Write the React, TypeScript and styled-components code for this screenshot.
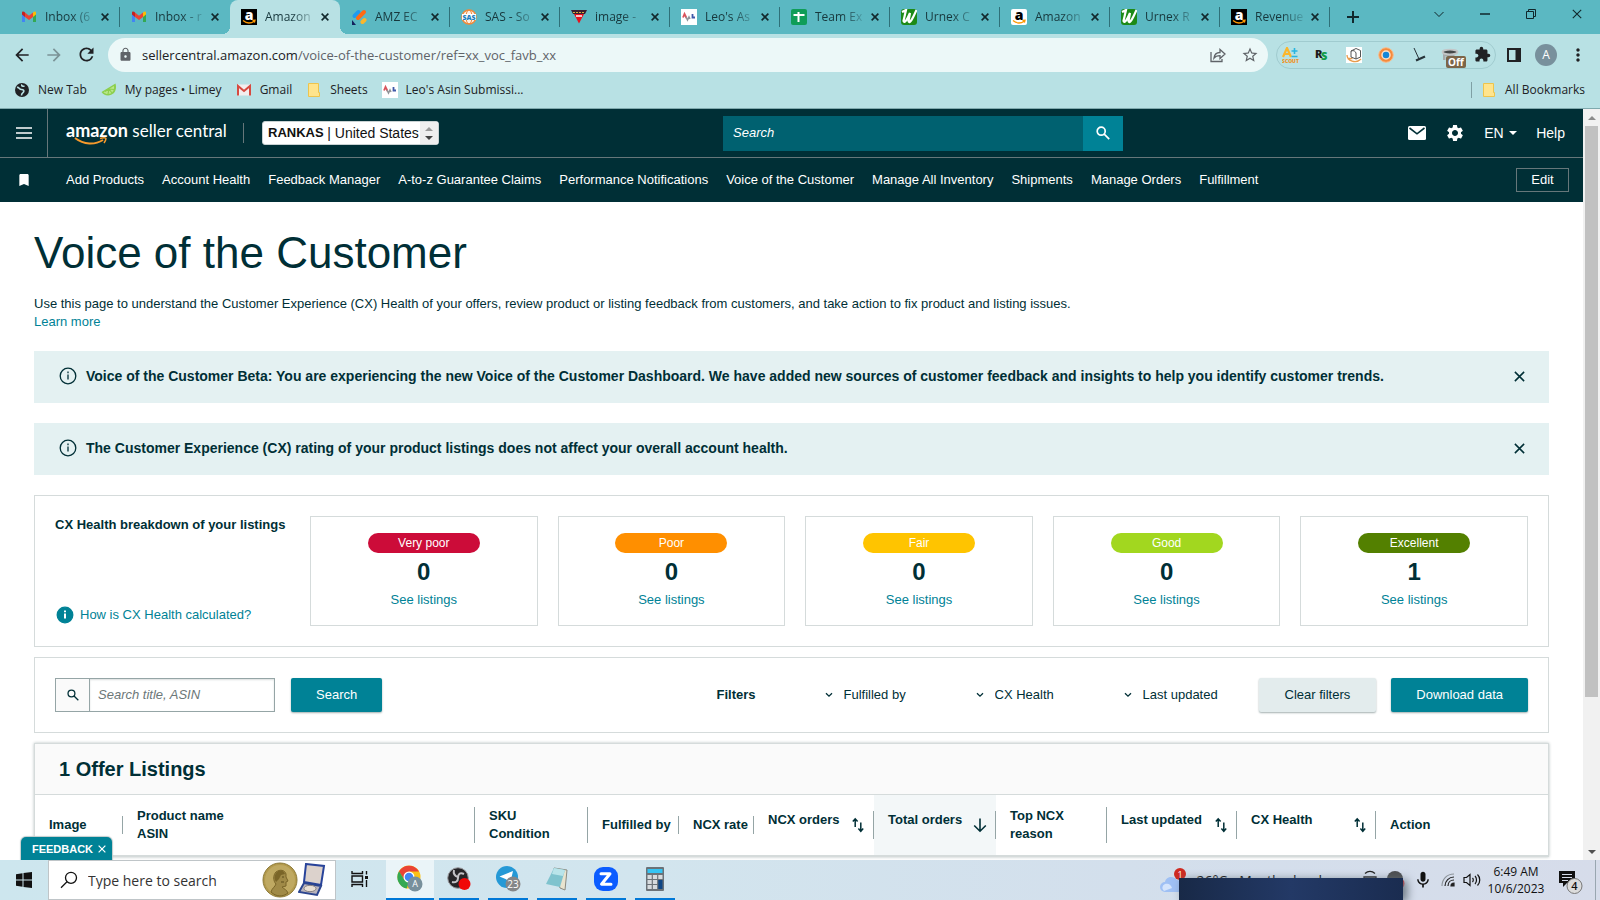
import React from 'react';
import styled, { createGlobalStyle, css } from 'styled-components';
import { MdLock, MdExtension, MdSettings, MdRefresh, MdMic, MdBookmark, MdArrowBack, MdArrowForward, MdStarBorder, MdMoreVert } from 'react-icons/md';

const ink = '#002f36';
const teal = '#008296';
const line = '#d5dbdb';
const uiFont = '"Open Sans", "Noto Sans", sans-serif';
const pageFont = '"Liberation Sans", Arial, sans-serif';

const Global = createGlobalStyle`
  * { box-sizing: border-box; }
  body { margin: 0; background: #fff; }
  button, input, select { font: inherit; color: inherit; margin: 0; }
  button { border: 0; padding: 0; background: none; display: flex; align-items: center; justify-content: center; }
  a { color: inherit; text-decoration: none; }
  svg { display: block; flex: none; }
`;

const Screen = styled.div`
  height: 100vh;
  display: flex;
  flex-direction: column;
  overflow: hidden;
  font: 13px/18px ${pageFont};
  color: ${ink};
`;

/* Browser frame */

const TabStrip = styled.div`
  display: flex;
  flex: none;
  height: 34px;
  padding-left: 10px;
  background: #5bb8c2;
  font: 12px/16px ${uiFont};
  color: #17373c;
`;
const Tab = styled.div<{ $active?: boolean; $divided?: boolean }>`
  position: relative;
  display: flex;
  align-items: center;
  flex: none;
  width: 110px;
  padding: 0 8px 0 11px;
  ${p => p.$active && css`
    z-index: 1;
    background: #b8e1e4;
    border-radius: 8px 8px 0 0;
    &::before, &::after {
      content: '';
      position: absolute;
      bottom: 0;
      width: 8px;
      height: 8px;
    }
    &::before { right: 100%; background: radial-gradient(circle at 0 0, transparent 8px, #b8e1e4 8px); }
    &::after { left: 100%; background: radial-gradient(circle at 100% 0, transparent 8px, #b8e1e4 8px); }
  `}
  ${p => p.$divided && css`
    &::after {
      content: '';
      position: absolute;
      right: 0;
      top: 7px;
      width: 1px;
      height: 20px;
      background: #2f7078;
    }
  `}
`;
const TabTitle = styled.span`
  flex: 1;
  min-width: 0;
  margin-left: 8px;
  white-space: nowrap;
  mask-image: linear-gradient(90deg, #000 50%, transparent 100%);
`;
const TabClose = styled.button`
  width: 14px;
  height: 16px;
  color: #12292d;
`;
const NewTab = styled.button`
  width: 46px;
  color: #12292d;
`;
const WindowButtons = styled.div`
  display: flex;
  margin-left: auto;
  height: 28px;
`;
const WindowButton = styled.button`
  width: 46px;
  color: #10272b;
`;

const Toolbar = styled.div`
  display: flex;
  align-items: center;
  flex: none;
  height: 41px;
  padding: 0 6px;
  background: #b8e1e4;
  color: #202124;
  font: 13px/18px ${uiFont};
`;
const ToolButton = styled.button<{ $dim?: boolean }>`
  flex: none;
  width: 32px;
  height: 28px;
  opacity: ${p => (p.$dim ? 0.4 : 1)};
`;
const AddressBar = styled.div`
  display: flex;
  align-items: center;
  flex: 1;
  height: 34px;
  margin: 0 8px 0 6px;
  padding: 0 2px 0 10px;
  border-radius: 17px;
  background: #ecf8f8;
  color: #5f6368;
`;
const Address = styled.div`
  flex: 1;
  margin-left: 9px;
  b { font-weight: 400; color: #202124; }
`;
const Extensions = styled.div`
  display: flex;
  align-items: center;
  justify-content: center;
  height: 28px;
  width: 220px;
  margin-right: 2px;
  border: 1px solid #a0cbcf;
  border-radius: 14px;
`;
const OffExt = styled.button`
  position: relative;
  flex: none;
  width: 32px;
  height: 28px;
`;
const OffBadge = styled.span`
  position: absolute;
  left: 12px;
  top: 15px;
  height: 12px;
  padding: 0 2px;
  border-radius: 2px;
  background: #7c6549;
  color: #fff;
  font: 700 10px/12px ${uiFont};
`;
const Avatar = styled.span`
  width: 22px;
  height: 22px;
  border-radius: 50%;
  background: #78909c;
  color: #fff;
  font: 12px/22px ${uiFont};
  text-align: center;
`;
const Bookmarks = styled.div`
  display: flex;
  align-items: center;
  flex: none;
  height: 34px;
  padding: 0 15px 4px 14px;
  gap: 14px;
  background: #b8e1e4;
  border-bottom: 1px solid #7fa9ad;
  color: #202124;
  font: 12px/16px ${uiFont};
`;
const Bookmark = styled.a<{ $last?: boolean }>`
  display: flex;
  align-items: center;
  gap: 8px;
  ${p => p.$last && css`
    margin-left: auto;
    padding-left: 9px;
    border-left: 1px solid #7fa0a4;
  `}
`;

/* Site */

const Viewport = styled.div`
  position: relative;
  display: flex;
  flex: 1;
  min-height: 0;
  background: #fff;
`;
const Page = styled.div`
  flex: 1;
  min-width: 0;
  overflow: hidden;
`;
const Scrollbar = styled.div`
  flex: none;
  display: flex;
  flex-direction: column;
  align-items: center;
  width: 17px;
  background: #f1f1f1;
  color: #505050;
`;
const Thumb = styled.div`
  width: 13px;
  flex: 571;
  background: #c1c1c1;
`;
const Track = styled.div`
  flex: 146;
`;
const ScrollArrow = styled.button`
  width: 17px;
  height: 17px;
`;

const Header = styled.header`
  background: ${ink};
  color: #fff;
`;
const TopRow = styled.div`
  display: flex;
  align-items: center;
  height: 49px;
  border-bottom: 1px solid #66777a;
`;
const MenuButton = styled.button`
  width: 48px;
  height: 48px;
  border-right: 1px solid #66777a;
`;
const Logo = styled.a`
  position: relative;
  margin-left: 18px;
  width: 160px;
  height: 30px;
  font: 17px/24px Lato, sans-serif;
  white-space: nowrap;
  b { font-weight: 700; font-size: 18px; }
  svg { position: absolute; left: 8px; top: 19px; }
`;
const LogoRule = styled.span`
  width: 1px;
  height: 20px;
  margin-left: 17px;
  background: #66777a;
`;
const Account = styled.label`
  position: relative;
  display: flex;
  align-items: center;
  width: 177px;
  height: 24px;
  margin-left: 18px;
  padding-left: 5px;
  border: 1px solid #c9d2d3;
  border-radius: 3px;
  background: #fff;
  color: #111;
  white-space: nowrap;
  select { position: absolute; inset: 0; width: 100%; opacity: 0; }
  span { font-size: 14px; }
`;
const Spinner = styled.i`
  display: flex;
  flex-direction: column;
  align-items: center;
  justify-content: center;
  gap: 5px;
  width: 18px;
  height: 22px;
  margin-left: auto;
  background: #efefef;
`;
const SearchBox = styled.div`
  display: flex;
  width: 400px;
  height: 35px;
  margin: 0 auto 0 284px;
  input {
    flex: 1;
    min-width: 0;
    padding: 0 10px;
    border: 0;
    background: #006170;
    font-style: italic;
  }
  input::placeholder { color: #fff; opacity: 1; }
  button { width: 40px; background: ${teal}; }
`;
const HeaderTools = styled.div`
  display: flex;
  align-items: center;
  gap: 19px;
  padding-right: 18px;
  font-size: 14px;
`;
const Language = styled.label`
  display: flex;
  align-items: center;
  gap: 5px;
  select { appearance: none; border: 0; padding: 0; background: none; }
`;
const NavRow = styled.nav`
  display: flex;
  align-items: center;
  height: 44px;
  padding: 0 14px 0 16px;
  gap: 18px;
  white-space: nowrap;
  > svg { margin-right: 16px; }
`;
const EditButton = styled.button`
  width: 53px;
  height: 24px;
  margin-left: auto;
  border: 1px solid #66777a;
`;

const Content = styled.main`
  padding: 24px 34px 0;
`;
const Title = styled.h1`
  margin: 0 0 15px;
  font: 400 44px/54px ${pageFont};
`;
const Intro = styled.p`
  margin: 0 0 20px;
  a { color: ${teal}; }
`;
const Banner = styled.div`
  display: flex;
  align-items: center;
  height: 52px;
  margin-bottom: 20px;
  padding: 0 20px 2px 25px;
  gap: 9px;
  background: #e4f1f2;
  font-weight: 700;
  font-size: 14px;
  button { margin-left: auto; width: 20px; height: 20px; }
`;
const Card = styled.section`
  border: 1px solid ${line};
  margin-bottom: 10px;
`;
const Health = styled(Card)`
  display: grid;
  grid-template-columns: 235px repeat(5, 1fr);
  gap: 20px;
  padding: 20px;
`;
const HealthIntro = styled.div`
  display: flex;
  flex-direction: column;
  justify-content: space-between;
  padding-bottom: 2px;
  white-space: nowrap;
`;
const InfoLink = styled.a`
  display: flex;
  align-items: center;
  gap: 6px;
  padding-left: 1px;
  color: ${teal};
`;
const Rating = styled.div`
  display: flex;
  flex-direction: column;
  align-items: center;
  height: 110px;
  padding-top: 16px;
  border: 1px solid ${line};
  a { color: ${teal}; }
`;
const Pill = styled.span<{ $color: string }>`
  width: 112px;
  border-radius: 10px;
  background: ${p => p.$color};
  color: #fff;
  font-size: 12px;
  line-height: 20px;
  text-align: center;
`;
const Count = styled.strong`
  font-size: 24px;
  line-height: 38px;
`;
const FilterBar = styled(Card)`
  display: flex;
  align-items: center;
  height: 76px;
  padding: 0 20px;
`;
const TitleSearch = styled.label`
  display: flex;
  width: 220px;
  height: 34px;
  margin-right: 16px;
  border: 1px solid #95a5a6;
  span {
    display: flex;
    align-items: center;
    justify-content: center;
    width: 34px;
    border-right: 1px solid #95a5a6;
    background: #fafafa;
  }
  input {
    flex: 1;
    min-width: 0;
    padding: 0 8px;
    border: 0;
    font-style: italic;
    box-shadow: inset 0 1px 2px #d9dede;
  }
  input::placeholder { color: #6c7778; opacity: 1; }
`;
const Action = styled.button<{ $quiet?: boolean }>`
  height: 34px;
  padding: 0 ${p => (p.$quiet ? 26 : 25)}px;
  border-radius: 2px;
  background: ${p => (p.$quiet ? '#e3eced' : teal)};
  color: ${p => (p.$quiet ? ink : '#fff')};
  box-shadow: 0 1px 2px #a3afb0;
  white-space: nowrap;
`;
const Filters = styled.div`
  display: flex;
  gap: 69px;
  margin: 0 40px 0 auto;
`;
const Filter = styled.label`
  display: flex;
  align-items: center;
  gap: 11px;
  select { appearance: none; border: 0; padding: 0; background: none; }
`;
const Actions = styled.div`
  display: flex;
  gap: 15px;
`;
const Listings = styled(Card)`
  margin: 0;
  box-shadow: 0 0 3px #b8c0c1;
  h2 {
    margin: 0;
    padding-left: 24px;
    background: #fafafa;
    border-bottom: 1px solid ${line};
    font-size: 20px;
    line-height: 50px;
  }
`;
const Table = styled.table`
  width: 100%;
  height: 61px;
  table-layout: fixed;
  border-collapse: collapse;
  border-bottom: 1px solid ${line};
  text-align: left;
`;
const Th = styled.th<{ $width?: number; $sorted?: boolean }>`
  width: ${p => (p.$width ? `${p.$width}px` : 'auto')};
  padding: 0;
  background: ${p => (p.$sorted ? '#f3f7f8' : 'transparent')};
  &:last-child > div { border: 0; }
`;
const HeadCell = styled.div<{ $sort?: boolean }>`
  display: flex;
  justify-content: space-between;
  min-height: ${p => (p.$sort ? 28 : 18)}px;
  padding-left: 14px;
  border-right: 1px solid #95a5a6;
  white-space: nowrap;
  button { align-self: center; width: 14px; height: 18px; margin-right: 8px; }
`;
const Feedback = styled.button`
  position: absolute;
  left: 21px;
  bottom: 0;
  width: 91px;
  height: 23px;
  gap: 5px;
  padding-left: 5px;
  border-radius: 5px 5px 0 0;
  background: ${teal};
  box-shadow: 0 0 1px 1px #c3cccd;
  color: #fff;
  font-weight: 700;
  font-size: 11px;
`;

/* Desktop task bar */

const Taskbar = styled.footer`
  position: relative;
  display: flex;
  flex: none;
  height: 40px;
  background: linear-gradient(90deg, #cde6ee, #d2e5ee 40%, #d3dfec 70%, #d6dcea);
  color: #111;
  font: 12px/17px ${uiFont};
`;
const Start = styled.button`
  width: 48px;
`;
const TaskSearch = styled.label`
  display: flex;
  align-items: center;
  width: 288px;
  padding: 0 9px 0 11px;
  border: 1px solid #bfc5c8;
  background: #fff;
  input {
    flex: 1;
    min-width: 0;
    margin-left: 10px;
    padding: 0;
    border: 0;
    background: none;
    font-size: 14px;
  }
  input::placeholder { color: #333; opacity: 1; }
`;
const Apps = styled.div`
  display: flex;
  margin-left: 3px;
  gap: 9px;
`;
const AppButton = styled.button<{ $active?: boolean; $idle?: boolean }>`
  width: ${p => (p.$active ? 48 : p.$idle ? 42 : 40)}px;
  margin: 0 ${p => (p.$active ? -4 : 0)}px;
  background: ${p => (p.$active ? '#eaf4f8' : 'none')};
  border-bottom: 2px solid ${p => (p.$idle ? 'transparent' : '#0078d7')};
`;
const Tray = styled.div`
  display: flex;
  align-items: center;
  margin-left: auto;
`;
const Weather = styled.span`
  display: flex;
  gap: 12px;
  margin: 0 16px 0 8px;
  font-size: 14px;
  white-space: nowrap;
`;
const TrayIcons = styled.div`
  display: flex;
  align-items: center;
  gap: 8px;
`;
const Clock = styled.div`
  width: 58px;
  margin: 0 14px 0 6px;
  text-align: center;
`;
const ShowDesktop = styled.span`
  width: 5px;
  height: 40px;
  margin-left: 12px;
  border-left: 1px solid #99a6b0;
`;
const Preview = styled.div`
  position: absolute;
  right: 197px;
  bottom: 0;
  width: 224px;
  height: 22px;
  background: linear-gradient(90deg, #182947, #233966 50%, #1a2c50);
  box-shadow: 4px 2px 10px #6b7680;
`;

/* Drawings */

const Cross = ({ size = 8, weight = 2 }: { size?: number; weight?: number }) => (
  <svg width={size} height={size} viewBox="0 0 10 10" stroke="currentColor" strokeWidth={weight}><path d="M.8.8l8.400 8.400M9.200.8L.8 9.200" /></svg>
);
const Triangle = ({ up, width = 8, color = 'currentColor' }: { up?: boolean; width?: number; color?: string }) => (
  <svg width={width} height={width / 2} viewBox="0 0 8 4" fill={color}><path d={up ? 'M0 4L4 0l4 4z' : 'M0 0h8L4 4z'} /></svg>
);
const Chevron = () => (
  <svg width="8" height="6" viewBox="0 0 8 6" fill="none" stroke="currentColor" strokeWidth="1.3"><path d="M1 1.2l3 3 3-3" /></svg>
);
const Lens = ({ size = 14, weight = 1.7 }: { size?: number; weight?: number }) => (
  <svg width={size} height={size} viewBox="0 0 14 14" fill="none" stroke="currentColor" strokeWidth={weight}><circle cx="5.2" cy="5.2" r="4" /><path d="M8.2 8.2l5 5" /></svg>
);
const InfoIcon = ({ solid }: { solid?: boolean }) => (
  <svg width="18" height="18" viewBox="0 0 18 18">
    <circle cx="9" cy="9" r="7.8" fill={solid ? teal : 'none'} stroke={solid ? teal : ink} strokeWidth="1.3" />
    <path d="M9 7.6v5M9 4.6v1.6" stroke={solid ? '#fff' : ink} strokeWidth={solid ? 2 : 1.3} />
  </svg>
);
const SortIcon = () => (
  <svg width="12" height="16" viewBox="0 0 12 16" fill="none" stroke={ink} strokeWidth="1.5"><path d="M3.2 10V2M.8 4.600l2.400-2.800 2.400 2.800M8.800 5.500v8.500M6.400 11.600l2.400 2.800 2.400-2.800" /></svg>
);
const DownIcon = () => (
  <svg width="14" height="16" viewBox="0 0 14 16" fill="none" stroke={ink} strokeWidth="1.6"><path d="M7 1.500v12.500M1.200 8.500L7 14.200l5.800-5.700" /></svg>
);
const GmailIcon = () => (
  <svg width="16" height="16" viewBox="0 0 16 16">
    <path d="M1 3.500v9.500h3V6z" fill="#4285f4" /><path d="M15 3.500v9.500h-3V6z" fill="#34a853" />
    <path d="M12 3.600V8l3-2.500V4c0-1.700-1.700-2-3-.4z" fill="#fbbc04" /><path d="M4 8V3.600L8 6.700l4-3.100V8l-4 3z" fill="#ea4335" />
    <path d="M1 4v1.500L4 8V3.600C2.700 2 1 2.300 1 4z" fill="#c5221f" />
  </svg>
);
const OldGmailIcon = () => (
  <svg width="16" height="16" viewBox="0 0 16 16"><rect x="1" y="2.500" width="14" height="11" rx="1" fill="#f3eeee" /><path d="M2 13.500V4l6 5 6-5v9.500" fill="none" stroke="#d64a40" strokeWidth="2" /></svg>
);
const AmazonIcon = ({ light }: { light?: boolean }) => (
  <svg width="16" height="16" viewBox="0 0 16 16">
    <rect width="16" height="16" rx={light ? 2 : 0} fill={light ? '#fff' : '#000'} />
    <text x="8" y="10.500" textAnchor="middle" fontFamily="Open Sans" fontWeight="800" fontSize="14" fill={light ? '#000' : '#fff'}>a</text>
    <path d="M2 11.500c3.500 3 8 3 11.500.4M11.500 11.400l2.500-.1-.6 2.300" fill="none" stroke="#f90" strokeWidth="1.300" />
  </svg>
);
const AmzIcon = () => (
  <svg width="16" height="16" viewBox="0 0 16 16" strokeWidth="4" strokeLinecap="round"><path d="M3.500 7L7.500 3" stroke="#1e9bf0" /><path d="M7 9l6-6" stroke="#ff6a13" /><path d="M11.500 13l2-2" stroke="#fbb72c" /><path d="M1 11v5h4z" fill="#13205c" /></svg>
);
const SasIcon = () => (
  <svg width="16" height="16" viewBox="0 0 16 16">
    <circle cx="8" cy="8" r="7" fill="#fdf1e6" stroke="#ee8a3c" strokeWidth="1.500" /><ellipse cx="8" cy="8" rx="3" ry="7" fill="none" stroke="#ee8a3c" />
    <path d="M1 5h14v6H1z" fill="#fff" /><text x="8" y="10.600" textAnchor="middle" fontFamily="Open Sans" fontWeight="800" fontSize="7" fill="#1a7fc0">SAS</text>
  </svg>
);
const FlagIcon = () => (
  <svg width="16" height="16" viewBox="0 0 16 16"><path d="M0 1h16l-2 4H2z" fill="#3c2030" /><path d="M2 3.500h12" stroke="#d8b33c" strokeDasharray="2 1" /><path d="M3 5h10l-5 9.500z" fill="#e8111c" /><path d="M5 7h6" stroke="#fff" strokeWidth="1.500" /></svg>
);
const LeoIcon = () => (
  <svg width="16" height="16" viewBox="0 0 16 16"><rect width="16" height="16" fill="#fff" /><path d="M2 8.500L3.500 5l2 4" fill="none" stroke="#d8545c" strokeWidth="1.800" /><path d="M5 8l1.500 3L8 8l1 2" fill="none" stroke="#8e9498" strokeWidth="1.500" /><path d="M11.500 5v3.500H14" fill="none" stroke="#4059a8" strokeWidth="1.800" /></svg>
);
const SheetsIcon = () => (
  <svg width="16" height="16" viewBox="0 0 16 16"><rect width="16" height="16" rx="2" fill="#0f9d58" /><path d="M7.500 3v10M2.500 6h11" stroke="#fff" strokeWidth="2" /></svg>
);
const UrnexIcon = () => (
  <svg width="16" height="16" viewBox="0 0 16 16"><rect width="16" height="16" rx="3" fill="#1d8a17" /><path d="M1 3l4-2L2.500 12c1 3 4-2 6.500-8L7.500 12c1 4 5-4 8-11" fill="none" stroke="#fff" strokeWidth="2.200" /></svg>
);
const GlobeIcon = () => (
  <svg width="16" height="16" viewBox="0 0 16 16"><circle cx="8" cy="8" r="7" fill="#202124" /><path d="M3 5.500c2-1 2 2 4.500 2 2 0 3 1 2 2.500s-2 1-2 3.500M8 2.500c-1 1.500 1 2 2.500 1.500" fill="none" stroke="#b8e1e4" strokeWidth="1.600" /></svg>
);
const LimeIcon = () => (
  <svg width="16" height="16" viewBox="0 0 16 16"><path d="M14.500 1.500c2 7-2 12-7.500 12-3 0-5-1.500-6.500-3.500z" fill="#8ccf4d" /><path d="M13 4c.5 4.500-2 8-6 8-2 0-3-.7-4.500-1.800z" fill="#b9e68a" /><path d="M8 7l-1 5M8 7l3 4M8 7l5 .5M8 7L4 9.500" stroke="#8ccf4d" strokeWidth="1.200" /></svg>
);
const FolderIcon = () => (
  <svg width="16" height="16" viewBox="0 0 16 16"><path d="M2.500 1.500h10v9h1v4h-11z" fill="#ffe48c" stroke="#edc44c" /></svg>
);
const ShareIcon = () => (
  <svg width="16" height="16" viewBox="0 0 16 16" fill="none" stroke="currentColor" strokeWidth="1.300"><path d="M1 5v9.500h11V12M4 11c.5-4 3-5.500 6-5.500v-3l5 4.500-5 4.500V8.600c-2.500 0-4.500.4-6 2.400z" /></svg>
);
const ScoutIcon = () => (
  <svg width="17" height="16" viewBox="0 0 17 16"><path d="M1 10L5 1l4 9M3 7h4.500" fill="none" stroke="#fbb62b" strokeWidth="2.200" /><path d="M12.500 1v6M9.500 4h6M9.500 9.500h6" stroke="#28b5e0" strokeWidth="1.600" /><text x="0" y="15.800" fontFamily="Open Sans" fontWeight="800" fontSize="5" fill="#f29222">SCOUT</text></svg>
);
const RsIcon = () => (
  <svg width="16" height="16" viewBox="0 0 16 16" fontFamily="Open Sans" fontWeight="800" fontSize="11"><text x="1" y="11" fill="#1b1b1b">R</text><text x="7" y="13" fill="#119a4a">S</text></svg>
);
const BoxesIcon = () => (
  <svg width="16" height="16" viewBox="0 0 16 16"><rect width="16" height="16" fill="#fff" /><path d="M1 8c0 6 9 9 14 4M1.500 11.500h5" fill="none" stroke="#e89b4c" strokeWidth="1.300" /><path d="M5 4l5-2.500 4.500 2V10L10 12 5 10zM5 4c3-1 4 0 5 2v6" fill="#fff" stroke="#555" /></svg>
);
const TargetIcon = () => (
  <svg width="16" height="16" viewBox="0 0 16 16"><circle cx="8" cy="8" r="7.300" fill="#f58a3c" stroke="#f8bd8c" /><circle cx="8" cy="8" r="4" fill="#1787d8" stroke="#fde1c8" strokeWidth="1.500" /></svg>
);
const LampIcon = () => (
  <svg width="16" height="16" viewBox="0 0 16 16" stroke="#263238"><path d="M4 1l5 11" /><path d="M6 13.500l9-4" strokeWidth="2.200" /></svg>
);
const DrumIcon = () => (
  <svg width="18" height="16" viewBox="0 0 18 16"><path d="M2 6v7h2.500V9h9V6z" fill="#a7a9aa" /><ellipse cx="9" cy="5" rx="7.500" ry="2.300" fill="#454849" stroke="#c3c6c7" strokeWidth="1.800" /></svg>
);
const SidePanelIcon = () => (
  <svg width="14" height="14" viewBox="0 0 14 14"><path d="M1 1h12v12H1z" fill="none" stroke="#202124" strokeWidth="2" /><path d="M8.500 1H13v12H8.500z" fill="#202124" /></svg>
);
const MailIcon = () => (
  <svg width="18" height="14" viewBox="0 0 18 14"><rect width="18" height="14" rx="1.500" fill="#fff" /><path d="M1.500 2L9 7.800 16.500 2" fill="none" stroke={ink} strokeWidth="1.600" /></svg>
);
const MedalIcon = () => (
  <svg width="36" height="38" viewBox="0 0 36 38"><circle cx="18" cy="19" r="17" fill="#b39a4e" stroke="#8d7a38" /><circle cx="18" cy="19" r="15" fill="#bfa962" /><path d="M9 31c1-4 4-5 5-8-3-3-3-9 0-12 4-3 9-2 10 2l0 3 2 4-2 1 0 4-4 1c2 2 5 3 6 6-5 4-12 4-17-1z" fill="#a08a47" stroke="#7a6528" /><path d="M14 12c3-4 8-3 9 1l-4 1-2 4-3 3c-2-3-2-6 0-9z" fill="#7a6528" /><path d="M20 16h2M19 21h3" stroke="#5d4c1c" /></svg>
);
const CaseIcon = () => (
  <svg width="28" height="34" viewBox="0 0 28 34"><path d="M8 1l18 2-3 19L6 19z" fill="#dcd2cc" stroke="#28439a" strokeWidth="2" /><path d="M6 20l17 3-4 9L1 29z" fill="#b9b4bd" stroke="#2b458f" strokeWidth="2" /><ellipse cx="12" cy="25.500" rx="6" ry="3.200" fill="#e8dfd4" stroke="#857f80" /></svg>
);
const TaskViewIcon = () => (
  <svg width="18" height="18" viewBox="0 0 18 18" fill="none" stroke="#111" strokeWidth="1.400"><path d="M1 1v2.500h10.500V1M1 17v-2.500h10.500V17M1 6h10.500v6H1zM15.500 1v3.500M15.500 10v7" /><path d="M14 6h3v3h-3z" fill="#111" stroke="none" /></svg>
);
const ChromeIcon = () => (
  <svg width="26" height="28" viewBox="0 0 26 28">
    <circle cx="12" cy="12" r="11.500" fill="#fbc116" /><path d="M2 6.500A11.500 11.500 0 0122 6.500H12L7.500 15z" fill="#ea4335" /><path d="M2 6.300l5.500 8.700L12 17.500 9.500 23.500A11.500 11.500 0 012 6.300z" fill="#34a853" /><circle cx="12" cy="12" r="5.500" fill="#fff" /><circle cx="12" cy="12" r="4.300" fill="#4285f4" />
    <circle cx="18" cy="19" r="7.500" fill="#78909c" /><text x="18" y="22.200" textAnchor="middle" fontFamily="Open Sans" fontSize="9" fill="#fff">A</text>
  </svg>
);
const ObsIcon = () => (
  <svg width="24" height="26" viewBox="0 0 24 26"><circle cx="11" cy="12" r="10.300" fill="#262528" stroke="#9a9a9e" /><path d="M7 4c-1 4 1 6 4 7M17 8c-4-2-6 0-6 4M5 16c4 1 6-1 6-4" fill="none" stroke="#c2c1c5" strokeWidth="2" /><circle cx="17.500" cy="18" r="6" fill="#f00808" /></svg>
);
const TelegramIcon = () => (
  <svg width="26" height="28" viewBox="0 0 26 28"><circle cx="12" cy="12" r="11" fill="#2599d6" /><path d="M4.500 11.500L18 6l-2.500 11-5-3z" fill="#fff" /><circle cx="18" cy="19" r="7.500" fill="#848688" /><text x="18" y="22.500" textAnchor="middle" fontFamily="Open Sans" fontSize="10" fill="#fff">23</text></svg>
);
const NotepadIcon = () => (
  <svg width="24" height="24" viewBox="0 0 24 24"><path d="M9 1l13 2-2 20-5-2z" fill="#e8e4cf" stroke="#8b8a80" /><path d="M9 1l11 2-5 17L1 17z" fill="#7fc3ce" /><path d="M9 1l11 2-2 6-11-2z" fill="#b9e4ea" /></svg>
);
const ZoomIcon = () => (
  <svg width="24" height="26" viewBox="0 0 24 26"><rect y="1" width="24" height="24" rx="9" fill="#0b5cff" /><path d="M7 7.800h9l-8.500 10.400h9.500" fill="none" stroke="#fff" strokeWidth="3" strokeLinejoin="round" strokeLinecap="round" /></svg>
);
const CalculatorIcon = () => (
  <svg width="18" height="24" viewBox="0 0 18 24"><rect width="18" height="24" rx="1" fill="#6b7278" /><path d="M1.500 2h15v4h-15z" fill="#35c4f3" /><path d="M1.500 8h4.200v4H1.500zM6.900 8h4.200v4H6.900zM12.300 8h4.200v4h-4.200zM1.500 13h4.200v4H1.500zM6.900 13h4.200v4H6.900zM1.500 18h4.200v4H1.500zM6.900 18h4.200v4H6.900z" fill="#d7dbde" /><path d="M12.300 13h4.200v9h-4.200z" fill="#0f4685" /></svg>
);
const CloudIcon = () => (
  <svg width="28" height="28" viewBox="0 0 28 28"><path d="M5 26a5 5 0 010-10c1-5 8-7 12-2 6 0 8 12 2 12z" fill="#9fc0f4" /><path d="M4 25a4 4 0 011-7c4-1 6 1 7 4z" fill="#d4e4fc" /><circle cx="20" cy="8" r="6" fill="#cf2a20" /><text x="20" y="11.500" textAnchor="middle" fontFamily="Open Sans" fontSize="9" fill="#fff">1</text></svg>
);
const CameraIcon = () => (
  <svg width="14" height="20" viewBox="0 0 14 20" fill="none" stroke="#222" strokeWidth="1.300"><path d="M2 3.500C5 .8 9 .8 12 3.500M1 7h12v8H1z" /></svg>
);
const AlertIcon = () => (
  <svg width="20" height="20" viewBox="0 0 20 20"><circle cx="10" cy="9" r="8" fill="#4c4e50" /><circle cx="14" cy="13.500" r="5.500" fill="#e1242b" /><path d="M12 11.500l4 4M16 11.500l-4 4" stroke="#fff" /></svg>
);
const WifiIcon = () => (
  <svg width="14" height="14" viewBox="0 0 14 14" fill="none" stroke="#222" strokeWidth="1.200"><path d="M1 13C1 6 6 1 13 1" stroke="#8d949a" /><path d="M4 13c0-5 4-9 9-9M7 13c0-3.500 2.500-6 6-6" /><path d="M10 13a3 3 0 013-3v3z" fill="#222" /></svg>
);
const SpeakerIcon = () => (
  <svg width="18" height="14" viewBox="0 0 18 14" fill="none" stroke="#111" strokeWidth="1.200"><path d="M1 4.500h2.500L7 1.500v11l-3.500-3H1zM9.500 5c1 1 1 3 0 4M12 3c2 2 2 6 0 8M14.500 1.500c3 3 3 8 0 11" /></svg>
);
const NoticeIcon = () => (
  <svg width="24" height="28" viewBox="0 0 24 28"><path d="M0 5h16v12H8l-4 4v-4H0z" fill="#111" /><path d="M3 8.500h10M3 11.500h10M3 14.500h6" stroke="#d6dcea" /><circle cx="15.500" cy="20" r="7.500" fill="#dcdcdc" stroke="#777" /><text x="15.500" y="24" textAnchor="middle" fontFamily="Open Sans" fontWeight="600" fontSize="11" fill="#111">4</text></svg>
);

const tabs: { title: string; icon: React.ReactNode; active?: boolean; divided?: boolean }[] = [
  { title: 'Inbox (6', icon: <GmailIcon />, divided: true },
  { title: 'Inbox - r', icon: <GmailIcon /> },
  { title: 'Amazon', icon: <AmazonIcon />, active: true },
  { title: 'AMZ EC', icon: <AmzIcon />, divided: true },
  { title: 'SAS - So', icon: <SasIcon />, divided: true },
  { title: 'image -', icon: <FlagIcon />, divided: true },
  { title: "Leo's As", icon: <LeoIcon />, divided: true },
  { title: 'Team Ex', icon: <SheetsIcon />, divided: true },
  { title: 'Urnex C', icon: <UrnexIcon />, divided: true },
  { title: 'Amazon', icon: <AmazonIcon light />, divided: true },
  { title: 'Urnex R', icon: <UrnexIcon />, divided: true },
  { title: 'Revenue', icon: <AmazonIcon />, divided: true },
];
const navLinks = ['Add Products', 'Account Health', 'Feedback Manager', 'A-to-z Guarantee Claims', 'Performance Notifications', 'Voice of the Customer', 'Manage All Inventory', 'Shipments', 'Manage Orders', 'Fulfillment'];
const banners = [
  'Voice of the Customer Beta: You are experiencing the new Voice of the Customer Dashboard. We have added new sources of customer feedback and insights to help you identify customer trends.',
  'The Customer Experience (CX) rating of your product listings does not affect your overall account health.',
];
const ratings: [string, string, number][] = [
  ['Very poor', '#cc0c39', 0],
  ['Poor', '#ff8f00', 0],
  ['Fair', '#ffc400', 0],
  ['Good', '#a2d71f', 0],
  ['Excellent', '#538000', 1],
];
const columns: { lines: string[]; width?: number; sort?: 'both' | 'down' }[] = [
  { lines: ['Image'], width: 88 },
  { lines: ['Product name', 'ASIN'] },
  { lines: ['SKU', 'Condition'], width: 113 },
  { lines: ['Fulfilled by'], width: 91 },
  { lines: ['NCX rate'], width: 75 },
  { lines: ['NCX orders'], width: 120, sort: 'both' },
  { lines: ['Total orders'], width: 122, sort: 'down' },
  { lines: ['Top NCX', 'reason'], width: 111 },
  { lines: ['Last updated'], width: 130, sort: 'both' },
  { lines: ['CX Health'], width: 139, sort: 'both' },
  { lines: ['Action'], width: 172 },
];

export default function App() {
  return (
    <Screen>
      <Global />
      <TabStrip>
        {tabs.map((t, i) => (
          <Tab key={i} $active={t.active} $divided={t.divided}>
            {t.icon}
            <TabTitle>{t.title}</TabTitle>
            <TabClose aria-label="Close tab"><Cross /></TabClose>
          </Tab>
        ))}
        <NewTab aria-label="New tab"><svg width="12" height="12" viewBox="0 0 12 12" stroke="currentColor" strokeWidth="2"><path d="M6 0v12M0 6h12" /></svg></NewTab>
        <WindowButtons>
          <WindowButton aria-label="Search tabs"><svg width="10" height="7" viewBox="0 0 10 7" fill="none" stroke="currentColor"><path d="M.5 1L5 5.500 9.500 1" /></svg></WindowButton>
          <WindowButton aria-label="Minimize"><svg width="10" height="2" viewBox="0 0 10 2"><path d="M0 1h10" stroke="currentColor" strokeWidth="1.500" /></svg></WindowButton>
          <WindowButton aria-label="Restore"><svg width="10" height="10" viewBox="0 0 10 10" fill="none" stroke="currentColor"><path d="M.5 2.500h7v7h-7zM2.500 2.500v-2h7v7h-2" /></svg></WindowButton>
          <WindowButton aria-label="Close"><Cross size={10} weight={1.1} /></WindowButton>
        </WindowButtons>
      </TabStrip>
      <Toolbar>
        <ToolButton aria-label="Back"><MdArrowBack size={20} /></ToolButton>
        <ToolButton aria-label="Forward" $dim><MdArrowForward size={20} /></ToolButton>
        <ToolButton aria-label="Reload"><MdRefresh size={21} /></ToolButton>
        <AddressBar>
          <MdLock size={15} />
          <Address><b>sellercentral.amazon.com</b>/voice-of-the-customer/ref=xx_voc_favb_xx</Address>
          <ToolButton aria-label="Share"><ShareIcon /></ToolButton>
          <ToolButton aria-label="Bookmark"><MdStarBorder size={18} /></ToolButton>
        </AddressBar>
        <Extensions>
          {[ScoutIcon, RsIcon, BoxesIcon, TargetIcon, LampIcon].map((Icon, i) => (
            <ToolButton key={i} aria-label="Extension"><Icon /></ToolButton>
          ))}
          <OffExt aria-label="Off extension"><DrumIcon /><OffBadge>Off</OffBadge></OffExt>
          <ToolButton aria-label="Extensions"><MdExtension size={17} /></ToolButton>
        </Extensions>
        <ToolButton aria-label="Side panel"><SidePanelIcon /></ToolButton>
        <ToolButton aria-label="Profile"><Avatar>A</Avatar></ToolButton>
        <ToolButton aria-label="Menu"><MdMoreVert size={20} /></ToolButton>
      </Toolbar>
      <Bookmarks>
        <Bookmark href="#"><GlobeIcon />New Tab</Bookmark>
        <Bookmark href="#"><LimeIcon />My pages • Limey</Bookmark>
        <Bookmark href="#"><OldGmailIcon />Gmail</Bookmark>
        <Bookmark href="#"><FolderIcon />Sheets</Bookmark>
        <Bookmark href="#"><LeoIcon />Leo's Asin Submissi...</Bookmark>
        <Bookmark href="#" $last><FolderIcon />All Bookmarks</Bookmark>
      </Bookmarks>

      <Viewport>
        <Page>
          <Header>
            <TopRow>
              <MenuButton aria-label="Menu"><svg width="16" height="12" viewBox="0 0 16 12" stroke="#fff" strokeWidth="1.700"><path d="M0 1h16M0 6h16M0 11h16" /></svg></MenuButton>
              <Logo href="#"><b>amazon</b> seller central
                <svg width="34" height="9" viewBox="0 0 34 9" fill="none" stroke="#f79a2c"><path d="M1 1c9 7 20 7 28 2" strokeWidth="2" /><path d="M26 1.500c3-1 6-1 6 0s-1 3-2 4.500" strokeWidth="1.500" /></svg>
              </Logo>
              <LogoRule />
              <Account>
                <b>RANKAS</b>&nbsp;<span>| United States</span>
                <Spinner><Triangle up color="#9a9a9a" /><Triangle color="#444" /></Spinner>
                <select aria-label="Account and marketplace"><option>RANKAS | United States</option></select>
              </Account>
              <SearchBox>
                <input type="search" aria-label="Search" placeholder="Search" />
                <button aria-label="Search"><Lens /></button>
              </SearchBox>
              <HeaderTools>
                <button aria-label="Messages"><MailIcon /></button>
                <button aria-label="Settings"><MdSettings size={20} /></button>
                <Language><select aria-label="Language"><option>EN</option></select><Triangle /></Language>
                <a href="#">Help</a>
              </HeaderTools>
            </TopRow>
            <NavRow>
              <MdBookmark size={16} />
              {navLinks.map(n => <a key={n} href="#">{n}</a>)}
              <EditButton>Edit</EditButton>
            </NavRow>
          </Header>
          <Content>
            <Title>Voice of the Customer</Title>
            <Intro>
              Use this page to understand the Customer Experience (CX) Health of your offers, review product or listing feedback from customers, and take action to fix product and listing issues.
              <br /><a href="#">Learn more</a>
            </Intro>
            {banners.map(b => (
              <Banner key={b}><InfoIcon />{b}<button aria-label="Dismiss"><Cross size={11} weight={1.4} /></button></Banner>
            ))}
            <Health>
              <HealthIntro>
                <b>CX Health breakdown of your listings</b>
                <InfoLink href="#"><InfoIcon solid />How is CX Health calculated?</InfoLink>
              </HealthIntro>
              {ratings.map(([label, color, count]) => (
                <Rating key={label}>
                  <Pill $color={color}>{label}</Pill>
                  <Count>{count}</Count>
                  <a href="#">See listings</a>
                </Rating>
              ))}
            </Health>
            <FilterBar>
              <TitleSearch><span><Lens size={12} weight={1.5} /></span><input aria-label="Search title, ASIN" placeholder="Search title, ASIN" /></TitleSearch>
              <Action>Search</Action>
              <Filters>
                <b>Filters</b>
                {['Fulfilled by', 'CX Health', 'Last updated'].map(f => (
                  <Filter key={f}><Chevron /><select aria-label={f}><option>{f}</option></select></Filter>
                ))}
              </Filters>
              <Actions>
                <Action $quiet>Clear filters</Action>
                <Action>Download data</Action>
              </Actions>
            </FilterBar>
            <Listings>
              <h2>1 Offer Listings</h2>
              <Table>
                <thead>
                  <tr>
                    {columns.map(c => (
                      <Th key={c.lines[0]} $width={c.width} $sorted={c.sort === 'down'}>
                        <HeadCell $sort={!!c.sort}>
                          <span>{c.lines.map((l, i) => <React.Fragment key={l}>{i > 0 && <br />}{l}</React.Fragment>)}</span>
                          {c.sort && <button aria-label={`Sort by ${c.lines[0]}`}>{c.sort === 'both' ? <SortIcon /> : <DownIcon />}</button>}
                        </HeadCell>
                      </Th>
                    ))}
                  </tr>
                </thead>
              </Table>
            </Listings>
          </Content>
        </Page>
        <Scrollbar>
          <ScrollArrow aria-label="Scroll up"><Triangle up color="#8b8b8b" /></ScrollArrow>
          <Thumb />
          <Track />
          <ScrollArrow aria-label="Scroll down"><Triangle /></ScrollArrow>
        </Scrollbar>
        <Feedback>FEEDBACK <Cross size={8} weight={1.5} /></Feedback>
      </Viewport>

      <Taskbar>
        <Start aria-label="Start"><svg width="16" height="16" viewBox="0 0 16 16" fill="#111"><path d="M0 2.200l6.500-.9v6.200H0zM7.500 1.100L16 0v7.500H7.500zM0 8.500h6.500v6.200L0 13.800zM7.500 8.500H16V16l-8.500-1.100z" /></svg></Start>
        <TaskSearch>
          <svg width="18" height="18" viewBox="0 0 18 18" fill="none" stroke="#111" strokeWidth="1.300"><circle cx="11" cy="6.800" r="5.500" /><path d="M7 10.800l-6 6" /></svg>
          <input aria-label="Type here to search" placeholder="Type here to search" />
          <MedalIcon /><CaseIcon />
        </TaskSearch>
        <Apps>
          <AppButton aria-label="Task view" $idle><TaskViewIcon /></AppButton>
          <AppButton aria-label="Chrome" $active><ChromeIcon /></AppButton>
          <AppButton aria-label="Recorder"><ObsIcon /></AppButton>
          <AppButton aria-label="Telegram"><TelegramIcon /></AppButton>
          <AppButton aria-label="Notepad"><NotepadIcon /></AppButton>
          <AppButton aria-label="Zoom"><ZoomIcon /></AppButton>
          <AppButton aria-label="Calculator"><CalculatorIcon /></AppButton>
        </Apps>
        <Tray>
          <CloudIcon />
          <Weather><span>26°C</span><span>Mostly cloudy</span></Weather>
          <TrayIcons>
            <Triangle up width={10} color="#222" />
            <CameraIcon />
            <AlertIcon />
            <MdMic size={20} />
            <WifiIcon />
            <SpeakerIcon />
          </TrayIcons>
          <Clock>6:49 AM<br />10/6/2023</Clock>
          <NoticeIcon />
          <ShowDesktop />
        </Tray>
        <Preview />
      </Taskbar>
    </Screen>
  );
}
